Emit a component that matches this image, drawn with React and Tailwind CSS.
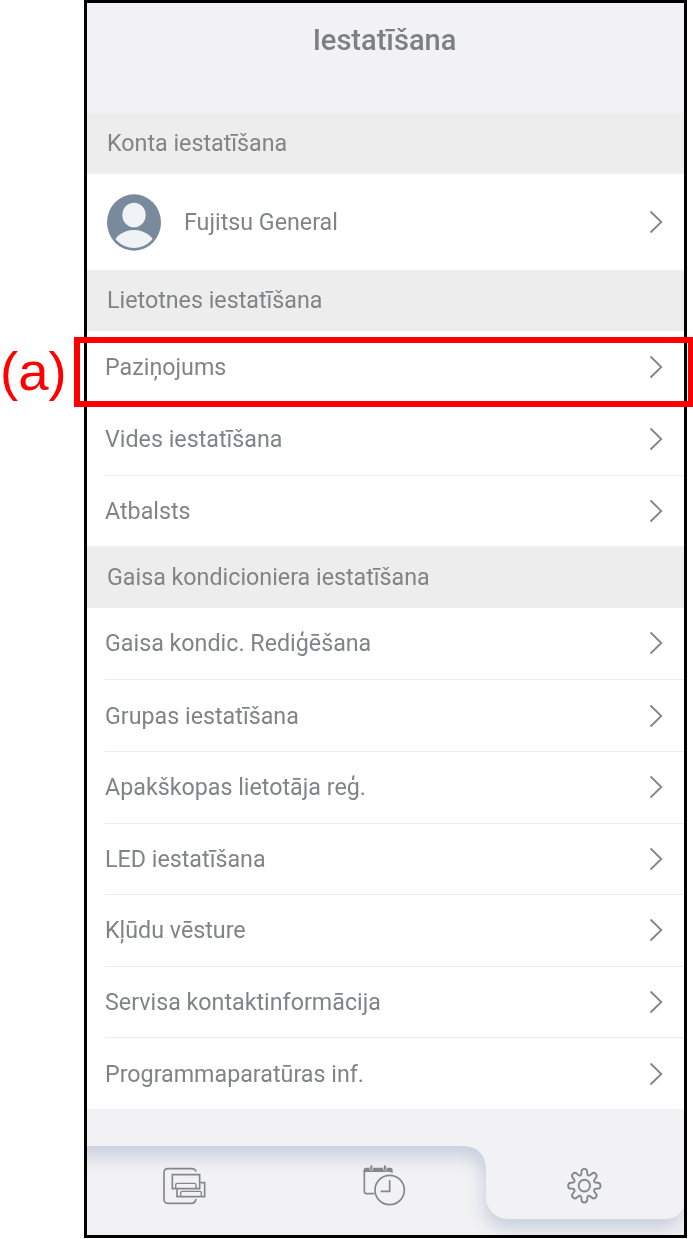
import React from 'react';

const appSettings = ['Paziņojums', 'Vides iestatīšana', 'Atbalsts'];

const airconSettings = [
  'Gaisa kondic. Rediģēšana',
  'Grupas iestatīšana',
  'Apakškopas lietotāja reģ.',
  'LED iestatīšana',
  'Kļūdu vēsture',
  'Servisa kontaktinformācija',
  'Programmaparatūras inf.',
];

// Eight round-tipped teeth joined by concave arcs
const gearPath = () => {
  let d = '';
  for (let i = 0; i < 8; i++) {
    const a = (i * Math.PI) / 4;
    const point = (r, w) =>
      `${(r * Math.cos(a) - w * Math.sin(a)).toFixed(2)} ${(r * Math.sin(a) + w * Math.cos(a)).toFixed(2)}`;
    d += i === 0 ? `M${point(34, -9)}` : `A5.2 5.2 0 0 0 ${point(34, -9)}`;
    d += `L${point(40, -8.5)}A8.5 8.5 0 0 1 ${point(40, 8.5)}L${point(34, 9)}`;
    if (i === 7) d += 'A5.2 5.2 0 0 0 34 -9Z';
  }
  return d;
};

function Chevron() {
  return (
    <svg className="w-[14px] h-[24px] mr-[21px] shrink-0" viewBox="0 0 14 24" fill="none" stroke="#818587" strokeWidth="1.8">
      <path d="M1.5 1.5 L12.3 12 L1.5 22.5" />
    </svg>
  );
}

function SectionHeader({ title }) {
  return (
    <div className="h-[61.4px] shrink-0 bg-[#ededed] pl-[19.5px] pb-[0.6px] flex items-center">
      <span className="origin-left scale-x-[0.969] whitespace-nowrap">{title}</span>
    </div>
  );
}

function SettingsList({ items }) {
  return (
    <ul className="pl-[18px]">
      {items.map((item, index) => (
        <li
          key={item}
          className={`h-[71.65px] flex items-center justify-between ${
            index > 0 ? 'border-t border-[#ececec]' : ''
          }`}
        >
          <span className="origin-left scale-x-[0.969] whitespace-nowrap">{item}</span>
          <Chevron />
        </li>
      ))}
    </ul>
  );
}

function UnitsIcon() {
  return (
    <svg className="w-[70px] h-[60px]" viewBox="0 0 210 180" fill="none" stroke="#84888a" strokeWidth="5">
      <path d="M138 50 Q136 41 124 41 H54 Q42 41 42 53 V133 Q42 145 54 145 H124 Q136 145 138 132" />
      <path d="M67 59 H149 V101 H67 Z" />
      <path d="M77 100 V90 Q77 85 82 85 H133 Q138 85 138 90 V100" strokeWidth="4" />
      <path d="M151 83 H164 V125 H81 V103" />
      <path d="M92 124 V113 Q92 109 96 109 H150 Q154 109 154 113 V124" strokeWidth="4" />
    </svg>
  );
}

function ScheduleIcon() {
  return (
    <svg className="w-[70px] h-[60px]" viewBox="0 0 210 180" fill="none" stroke="#84888a" strokeWidth="5">
      <path d="M73 116 H50 Q43 116 43 109 V45" />
      <path d="M41 51 V45 Q41 38 48 38 H121 Q128 38 128 45 V54 Q118 49 105 51 Z" fill="#84888a" stroke="none" />
      <path d="M64 34 V42 M105 34 V42" stroke="#e8eaf0" strokeWidth="11" strokeLinecap="round" />
      <path d="M64 34 V43 M105 34 V43" strokeWidth="6.5" strokeLinecap="round" />
      <circle cx="119" cy="105" r="44" />
      <path d="M119 76 V109 H92" />
    </svg>
  );
}

function GearIcon() {
  return (
    <svg className="w-[70px] h-[60px]" viewBox="0 0 210 180" fill="none" stroke="#84888a" strokeWidth="5.5">
      <g transform="translate(103 92) scale(1 1.04)">
        <path d={gearPath()} />
        <circle r="17" />
      </g>
    </svg>
  );
}

function TabBar() {
  return (
    <nav className="relative h-[89px] shrink-0">
      <svg className="absolute inset-0 w-[597px] h-[89px]" viewBox="0 0 597 89">
        <defs>
          <clipPath id="recess">
            <path d="M0 0 H376 C390 0 399 9 399 23 V51 C399 64 409 73 422 73 H577 C588 73 594 68 597 61 V89 H0 Z" />
          </clipPath>
          <filter id="soften" x="-20%" y="-60%" width="140%" height="220%" colorInterpolationFilters="sRGB">
            <feGaussianBlur stdDeviation="8.5" />
          </filter>
        </defs>
        <g clipPath="url(#recess)">
          <path
            d="M-60 -80 H680 V55 H597 C594 75 588 83 577 83 H422 C405 83 397 72 397 58 V34 C397 20 390 11 378 11 H-60 Z"
            fill="#c9cfde"
            filter="url(#soften)"
          />
        </g>
      </svg>
      <div className="relative flex gap-[130px] pl-[63px] pt-[9px]">
        <UnitsIcon />
        <ScheduleIcon />
        <GearIcon />
      </div>
    </nav>
  );
}

function App() {
  return (
    <div className="relative w-[693px] h-[1239px] overflow-hidden bg-white pl-[84px] font-['Roboto',sans-serif] text-[24px] leading-[30px] text-[#808486]">
      <div className="w-[603px] h-[1238px] border-[3px] border-black bg-[#f2f2f4] flex flex-col">
        <header className="h-[110px] shrink-0 pt-[19px] pr-[2px] text-center">
          <h1 className="text-[30px] leading-[36px] font-medium text-[#7b8081] scale-x-[0.968]">Iestatīšana</h1>
        </header>
        <main className="h-[995.5px] shrink-0 bg-white">
          <SectionHeader title="Konta iestatīšana" />
          <div className="h-[95.5px] pl-[20px] flex items-center">
            <svg className="w-[54px] h-[57px] shrink-0" viewBox="0 0 54 57">
              <defs>
                <clipPath id="avatar">
                  <ellipse cx="27" cy="28.500" rx="24.500" ry="25.500" />
                </clipPath>
              </defs>
              <ellipse cx="27" cy="28.500" rx="27" ry="28.200" fill="#788a9c" />
              <ellipse cx="27" cy="21" rx="11.700" ry="12.300" fill="#eff3f5" />
              <ellipse cx="27" cy="55" rx="22" ry="19" fill="#eff3f5" clipPath="url(#avatar)" />
            </svg>
            <span className="ml-[22.5px] grow origin-left scale-x-[0.969] whitespace-nowrap">Fujitsu General</span>
            <Chevron />
          </div>
          <SectionHeader title="Lietotnes iestatīšana" />
          <SettingsList items={appSettings} />
          <SectionHeader title="Gaisa kondicioniera iestatīšana" />
          <SettingsList items={airconSettings} />
        </main>
        <div className="grow" />
        <TabBar />
      </div>

      {/* Callout */}
      <div className="absolute left-[74px] top-[337px] w-[620px] h-[70px] border-[6px] border-[#ff0000]" />
      <span className="absolute left-0 top-[342px] font-['Liberation_Sans',Arial,sans-serif] text-[54.5px] leading-[60px] text-[#ff0000]">
        (a)
      </span>
    </div>
  );
}

export default App;
